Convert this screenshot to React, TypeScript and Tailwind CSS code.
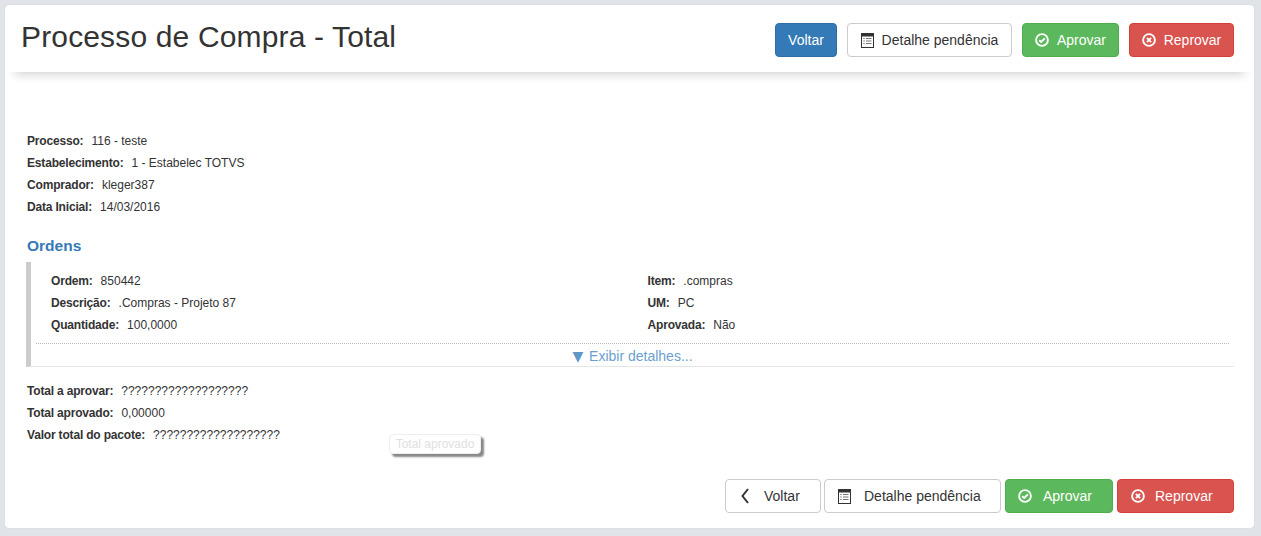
function Field({ label, value }: { label: string; value: string }) {
  return (
    <div className="flex h-[22px] items-baseline text-xs leading-[22px] text-[#333]">
      <span className="font-bold tracking-[-0.18px]">{label}:</span>
      <span className="ml-2">{value}</span>
    </div>
  )
}

function ListIcon() {
  return (
    <svg width="13" height="15" viewBox="0 0 13 15" className="shrink-0">
      <rect x="0.5" y="0.5" width="12" height="14" fill="none" stroke="#333" />
      <rect x="0" y="0" width="13" height="3.5" fill="#333" />
      <path d="M2.5 5.5h1M2.5 8h1M2.5 10.5h1" stroke="#333" />
      <path d="M5 5.5h5.5M5 8h5.5M5 10.5h5.5" stroke="#777" />
    </svg>
  )
}

function CheckIcon() {
  return (
    <svg width="14" height="14" viewBox="0 0 14 14" fill="none" stroke="#fff" className="shrink-0">
      <circle cx="7" cy="7" r="5.9" strokeWidth="1.9" />
      <path d="M4.2 7.2 6.2 9 9.8 5.4" strokeWidth="1.9" />
    </svg>
  )
}

function TimesIcon() {
  return (
    <svg width="14" height="14" viewBox="0 0 14 14" fill="none" stroke="#fff" className="shrink-0">
      <circle cx="7" cy="7" r="5.9" strokeWidth="1.9" />
      <path d="M4.9 4.9 9.1 9.1M9.1 4.9 4.9 9.1" strokeWidth="2" />
    </svg>
  )
}

function BackIcon() {
  return (
    <svg width="8" height="16" viewBox="0 0 8 16" fill="none" stroke="#333" strokeWidth="2" className="shrink-0">
      <path d="M7 1 1.5 8 7 15" />
    </svg>
  )
}

const btn = 'flex h-[34px] items-center rounded border text-sm text-[#333]'

export default function App() {
  return (
    <div className="h-[536px] bg-[#e0e4e8] px-[5px] pt-[5px] font-['Liberation_Sans',sans-serif]">
      <div className="relative h-[523px] w-[1249px] rounded bg-white shadow-[0_0_1px_#bbb]">
        <header className="flex h-[67px] items-start justify-between rounded-t pl-4 pr-5 pt-[18px] shadow-[0_12px_10px_-10px_rgba(0,0,0,0.2)]">
          <h1 className="-mt-[3px] text-[30px] leading-[33px] tracking-[0.15px] text-[#333]">
            Processo de Compra - Total
          </h1>
          <div className="flex gap-2.5">
            <button className={`${btn} w-[62px] justify-center border-[#2e6da4] bg-[#337ab7] text-white`}>
              Voltar
            </button>
            <button className={`${btn} w-[165px] justify-center gap-2 border-[#ccc] bg-white`}>
              <ListIcon />
              Detalhe pendência
            </button>
            <button className={`${btn} w-[97px] justify-center gap-2 border-[#4cae4c] bg-[#5cb85c] text-white`}>
              <CheckIcon />
              Aprovar
            </button>
            <button className={`${btn} w-[105px] justify-center gap-2 border-[#d43f3a] bg-[#d9534f] text-white`}>
              <TimesIcon />
              Reprovar
            </button>
          </div>
        </header>

        <div className="pl-[21px] pr-5 pt-[58px]">
          <div className="pl-px">
            <Field label="Processo" value="116 - teste" />
            <Field label="Estabelecimento" value="1 - Estabelec TOTVS" />
            <Field label="Comprador" value="kleger387" />
            <Field label="Data Inicial" value="14/03/2016" />

            <h2 className="mt-[17px] h-[22px] text-[15.5px] leading-[22px] font-bold text-[#337ab7]">Ordens</h2>
          </div>

          <section className="mt-[5px] h-[105px] border-b border-l-[5px] border-b-[#e5e5e5] border-l-[#ccc] px-[5px] pt-[8px]">
            <div className="grid grid-cols-2 border-b border-dotted border-[#bbb] pb-[7px]">
              <div className="pl-[15px]">
                <Field label="Ordem" value="850442" />
                <Field label="Descrição" value=".Compras - Projeto 87" />
                <Field label="Quantidade" value="100,0000" />
              </div>
              <div className="pl-[15px]">
                <Field label="Item" value=".compras" />
                <Field label="UM" value="PC" />
                <Field label="Aprovada" value="Não" />
              </div>
            </div>
            <div className="text-center text-sm leading-6 text-[#6c9fd0]">
              <span className="mr-0.5 font-['DejaVu_Sans',sans-serif] text-[#5f97c9]">▼</span> Exibir detalhes...
            </div>
          </section>

          <div className="mt-[13px] pl-px">
            <Field label="Total a aprovar" value="???????????????????" />
            <Field label="Total aprovado" value="0,00000" />
            <Field label="Valor total do pacote" value="???????????????????" />
          </div>

          <div className="mt-[33px] flex justify-end gap-1">
            <button className={`${btn} -mr-px w-[96px] gap-[15px] border-[#ccc] bg-white pl-[15px]`}>
              <BackIcon />
              Voltar
            </button>
            <button className={`${btn} w-[177px] gap-[13px] border-[#ccc] bg-white pl-[13px]`}>
              <ListIcon />
              Detalhe pendência
            </button>
            <button className={`${btn} w-[108px] gap-[11px] border-[#4cae4c] bg-[#5cb85c] pl-3 text-white`}>
              <CheckIcon />
              Aprovar
            </button>
            <button className={`${btn} w-[117px] gap-2.5 border-[#d43f3a] bg-[#d9534f] pl-[13px] text-white`}>
              <TimesIcon />
              Reprovar
            </button>
          </div>
        </div>

        <div className="absolute left-[384px] top-[429px] flex h-5 w-[92px] items-center justify-center rounded-sm border border-[#eee] bg-white text-xs text-[#e2e0e2] shadow-[3px_3px_2px_#888]">
          Total aprovado
        </div>
      </div>
    </div>
  )
}
